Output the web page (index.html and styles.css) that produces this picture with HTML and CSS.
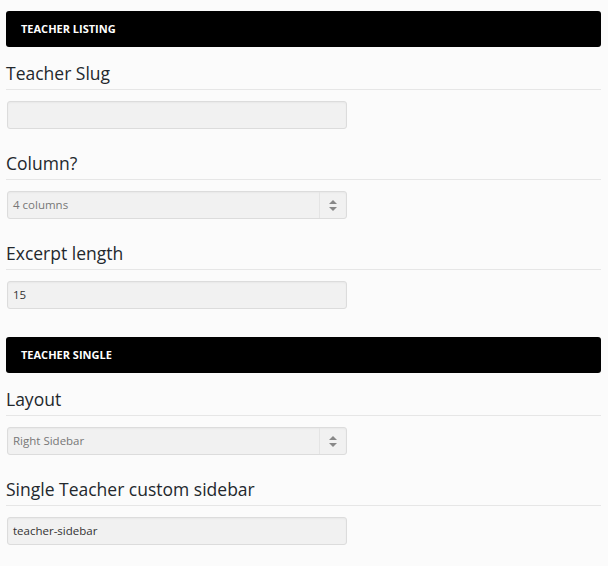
FILE: index.html
```html
<!DOCTYPE html>
<html>
<head>
<meta charset="utf-8">
<link rel="stylesheet" href="styles.css">
</head>
<body>
<div class="panel">
  <div class="section-head">TEACHER LISTING</div>
  <div class="field">
    <div class="field-title">Teacher Slug</div>
    <div class="control"><div class="input"></div></div>
  </div>
  <div class="field">
    <div class="field-title">Column?</div>
    <div class="control"><div class="input select"><span class="select-text">4 columns</span><span class="arrow"><svg width="8" height="11" viewBox="0 0 8 11"><path d="M4 0 L8 4 L0 4 Z M0 7 L8 7 L4 11 Z" fill="#888"/></svg></span></div></div>
  </div>
  <div class="field">
    <div class="field-title">Excerpt length</div>
    <div class="control"><div class="input">15</div></div>
  </div>
  <div class="section-head second">TEACHER SINGLE</div>
  <div class="field">
    <div class="field-title">Layout</div>
    <div class="control"><div class="input select"><span class="select-text">Right Sidebar</span><span class="arrow"><svg width="8" height="11" viewBox="0 0 8 11"><path d="M4 0 L8 4 L0 4 Z M0 7 L8 7 L4 11 Z" fill="#888"/></svg></span></div></div>
  </div>
  <div class="field">
    <div class="field-title">Single Teacher custom sidebar</div>
    <div class="control"><div class="input">teacher-sidebar</div></div>
  </div>
</div>
</body>
</html>
```
FILE: styles.css
```css
html, body {
  margin: 0;
  padding: 0;
  background: #fbfbfb;
}
body {
  font-family: "Open Sans", "DejaVu Sans", sans-serif;
  color: #23282d;
}
.panel {
  padding: 11px 7px 0 6px;
}
.section-head {
  height: 36px;
  background: #000;
  border-radius: 3px;
  color: #fff;
  font-weight: 700;
  font-size: 11px;
  line-height: 36px;
  padding-left: 15px;
}
.section-head.second {
  margin-top: 28px;
}
.field-title {
  font-size: 17.5px;
  font-weight: 500;
  line-height: 24px;
  margin-top: 22px;
  padding-bottom: 4px;
  border-bottom: 1px solid #e6e6e6;
}
.section-head + .field .field-title {
  margin-top: 14px;
}
.control {
  padding-top: 11px;
}
.input {
  box-sizing: border-box;
  margin-left: 1px;
  width: 340px;
  height: 28px;
  border: 1px solid #dcdcdc;
  border-radius: 3px;
  background: #f1f1f1;
  box-shadow: inset 0 1px 2px rgba(0,0,0,0.04);
  font-size: 11.5px;
  line-height: 26px;
  padding-left: 5px;
  color: #333;
}
.select {
  display: flex;
  padding-left: 0;
}
.select-text {
  flex: 1;
  padding-left: 5px;
  color: #777;
}
.arrow {
  width: 26px;
  border-left: 1px solid #e4e4e4;
  display: flex;
  align-items: center;
  justify-content: center;
}
.arrow svg {
  display: block;
}
```
